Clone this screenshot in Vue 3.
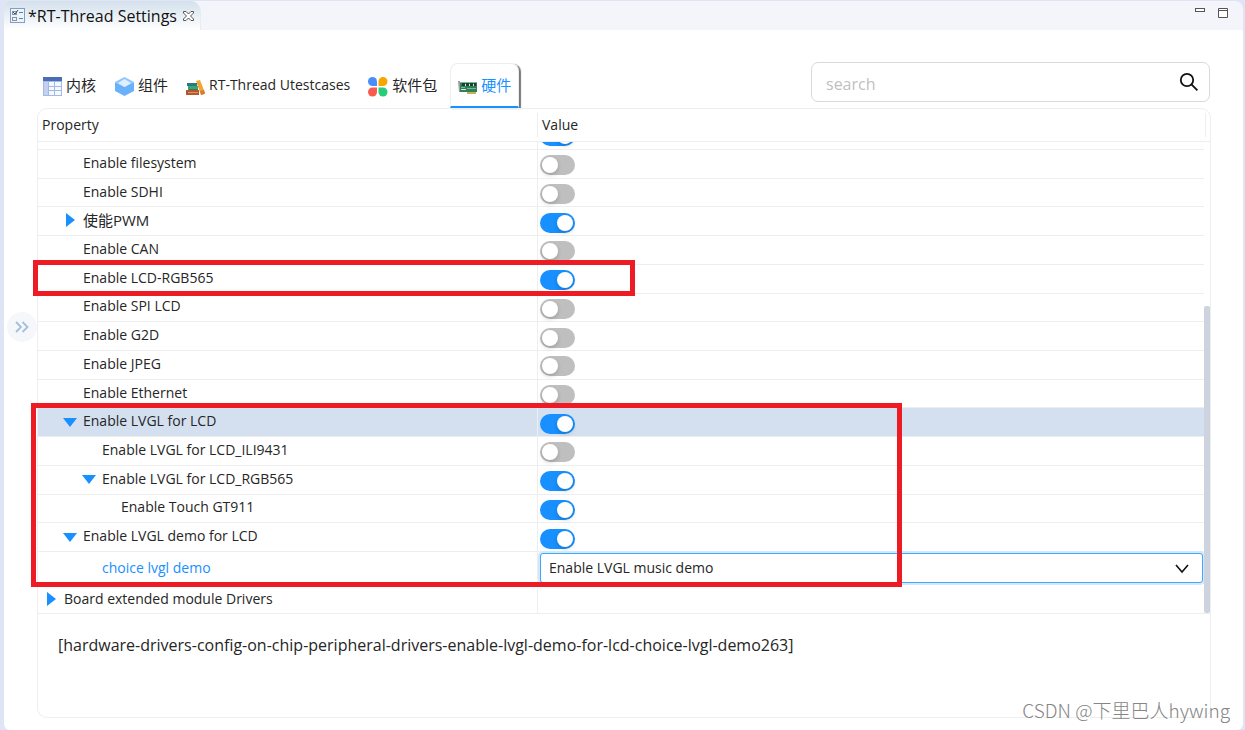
<script setup>
import { ref } from 'vue'

const tabs = [
  { id: 'kernel', label: '内核', cjk: true },
  { id: 'components', label: '组件', cjk: true },
  { id: 'tests', label: 'RT-Thread Utestcases' },
  { id: 'packages', label: '软件包', cjk: true },
  { id: 'hardware', label: '硬件', cjk: true },
]
const active = ref('hardware')

const rows = ref([
  { name: 'Enable filesystem', level: 2, on: false },
  { name: 'Enable SDHI', level: 2, on: false },
  { name: '使能PWM', level: 2, on: true, arrow: 'closed', cjk: true },
  { name: 'Enable CAN', level: 2, on: false },
  { name: 'Enable LCD-RGB565', level: 2, on: true },
  { name: 'Enable SPI LCD', level: 2, on: false },
  { name: 'Enable G2D', level: 2, on: false },
  { name: 'Enable JPEG', level: 2, on: false },
  { name: 'Enable Ethernet', level: 2, on: false },
  { name: 'Enable LVGL for LCD', level: 2, on: true, arrow: 'open', selected: true },
  { name: 'Enable LVGL for LCD_ILI9431', level: 3, on: false },
  { name: 'Enable LVGL for LCD_RGB565', level: 3, on: true, arrow: 'open' },
  { name: 'Enable Touch GT911', level: 4, on: true },
  { name: 'Enable LVGL demo for LCD', level: 2, on: true, arrow: 'open' },
])
const demo = ref('music')
const search = ref('')
</script>

<template>
  <div class="window">
    <header class="titlebar">
      <div class="doc-tab">
        <svg class="doc-icon" width="15" height="15" viewBox="0 0 15 15" fill="none">
          <rect x=".5" y=".5" width="14" height="14" fill="#eef4fb" stroke="#7f9fc6" />
          <rect x="2.5" y="3.5" width="4" height="3" stroke="#8a949e" />
          <path d="M3 4l2 2 3-4" stroke="#34495e" />
          <rect x="2.5" y="9.5" width="4" height="3" stroke="#8a949e" />
          <path d="M9 4.500h4M9 10.500h4" stroke="#6580a5" />
        </svg>
        <span>*RT-Thread Settings</span>
        <button class="plain" aria-label="Close">
          <svg width="11" height="10" viewBox="0 0 11 10" fill="#fff" stroke="#555" stroke-width="1">
            <path d="M.5.5h2.500l2.500 2.500L8 .5h2.500v1.500L7.500 5l3 3v1.500H8L5.500 7 3 9.500H.5V8l3-3-3-3z" />
          </svg>
        </button>
      </div>
      <div class="window-buttons">
        <button class="plain" aria-label="Minimize">
          <svg width="10" height="10" viewBox="0 0 10 10"><rect x=".5" y=".5" width="9" height="3" fill="#fff" stroke="#555" /></svg>
        </button>
        <button class="plain" aria-label="Maximize">
          <svg width="10" height="10" viewBox="0 0 10 10"><path d="M.5.5h9v9h-9zM.5 2.500h9" fill="#fff" stroke="#555" /></svg>
        </button>
      </div>
    </header>

    <main class="content">
      <div class="toolbar">
        <nav class="tabs">
          <button v-for="t in tabs" :key="t.id" class="tab" :class="{ active: t.id === active }" @click="active = t.id">
            <svg v-if="t.id === 'kernel'" width="19" height="19" viewBox="0 0 19 19">
              <path fill="#a3b8e2" d="M0 4h19v15H0z" /><path fill="#4a6db5" d="M0 0h19v4H0z" />
              <path fill="#c3d1ee" d="M1 5h4v13H1z" />
              <path fill="#f4f8ff" d="M6 5h5v4H6zM12 5h6v4h-6zM6 10h5v3H6zM12 10h6v3h-6zM6 14h5v4H6zM12 14h6v4h-6z" />
            </svg>
            <svg v-else-if="t.id === 'components'" width="19" height="19" viewBox="0 0 19 19">
              <path fill="#69b1fb" d="M0 5l9.500 5L19 5v9l-9.500 5L0 14z" /><path fill="#8ec6fd" d="M0 5l9.500-5L19 5l-9.500 5z" />
              <path fill="#deefff" d="M3 6l6.500-4L16 6 9.500 10z" />
            </svg>
            <svg v-else-if="t.id === 'tests'" width="19" height="19" viewBox="0 0 19 19">
              <path fill="#f0a534" d="M10 4l4-1 5 13-4 2z" /><path fill="#d67b35" d="M14 14l4-1 1 4-4 1z" />
              <path fill="#28788a" d="M1 6h10v3H1z" /><path fill="#3aa676" d="M2 9h10v4H2z" />
              <path fill="#3d7a52" d="M3 12h9v1H3z" />
              <path fill="#b8562f" d="M0 13h13v5H0z" /><path fill="#dc9560" d="M2 15h10v1H2z" />
            </svg>
            <svg v-else-if="t.id === 'packages'" width="20" height="20" viewBox="0 0 20 20">
              <path fill="#4b8df8" d="M4.500 0A4.500 4.500 0 0 1 9 4.500V9H4.500a4.500 4.500 0 0 1 0-9z" />
              <path fill="#f5a700" d="M15 0a4.500 4.500 0 0 1 0 9h-4.500V4.500A4.500 4.500 0 0 1 15 0z" />
              <path fill="#fa5b4c" d="M4.500 10.500H9V15a4.500 4.500 0 1 1-4.500-4.500z" />
              <path fill="#27cd78" d="M10.500 10.500H15a4.500 4.500 0 1 1-4.500 4.500z" />
            </svg>
            <svg v-else width="20" height="19" viewBox="0 0 20 19">
              <path fill="#98a2a5" d="M0 3h2l1 11H1z" /><path fill="#2f7f58" d="M2 4h17v10H2z" />
              <path fill="#163f36" d="M4 5h3v3H4zM8 5h3v3H8zM12 5h3v3h-3zM16 5h2v3h-2z" />
              <path fill="#dce9cb" d="M7 6h1v2H7zM11 6h1v2h-1zM15 6h1v2h-1zM3 11h5v1H3z" />
              <path fill="#7cb795" d="M2 4h17v1H2zM9 10h9v1H9zM3 9h4v1H3z" /><path fill="#c9af62" d="M9 14h9v2H9z" />
            </svg>
            <span :class="{ cjk: t.cjk }">{{ t.label }}</span>
          </button>
        </nav>
        <div class="search">
          <input v-model="search" type="text" placeholder="search" aria-label="search" />
          <button class="plain" aria-label="Search">
            <svg width="20" height="20" viewBox="0 0 20 20" fill="none" stroke="#111" stroke-width="1.800">
              <circle cx="8" cy="8" r="6.200" /><path d="M12.400 12.400l6 6" />
            </svg>
          </button>
        </div>
      </div>

      <section class="panel">
        <div class="table-area">
          <table>
            <thead>
              <tr><th scope="col">Property</th><th scope="col">Value</th></tr>
            </thead>
            <tbody>
              <tr class="clipped">
                <td></td>
                <td><input class="switch" type="checkbox" checked aria-label="Previous option" /></td>
              </tr>
              <tr v-for="(r, i) in rows" :key="r.name" :class="{ selected: r.selected }">
                <td :class="'level' + r.level">
                  <span v-if="r.arrow" class="arrow" :class="r.arrow"></span>
                  <label :for="'opt' + i" :class="{ cjk: r.cjk }">{{ r.name }}</label>
                </td>
                <td><input :id="'opt' + i" v-model="r.on" class="switch" type="checkbox" /></td>
              </tr>
              <tr class="choice">
                <td class="level3"><label for="demo">choice lvgl demo</label></td>
                <td>
                  <select id="demo" v-model="demo"><option value="music">Enable LVGL music demo</option></select>
                  <svg class="chevron" width="14" height="10" viewBox="0 0 14 10" fill="none" stroke="#111" stroke-width="1.600"><path d="M1 1l6 7 6-7" /></svg>
                </td>
              </tr>
              <tr class="board">
                <td class="level1"><span class="arrow closed"></span><span>Board extended module Drivers</span></td>
                <td></td>
              </tr>
            </tbody>
          </table>
          <div class="scrollbar"></div>
          <div class="mark mark-rgb"></div>
          <div class="mark mark-lvgl"></div>
        </div>
        <p class="description">[hardware-drivers-config-on-chip-peripheral-drivers-enable-lvgl-demo-for-lcd-choice-lvgl-demo263]</p>
      </section>
      <button class="expand" aria-label="Expand">
        <svg width="14" height="12" viewBox="0 0 14 12" fill="none" stroke="#a4bfdc" stroke-width="1.800"><path d="M1 1l5 5-5 5M7.500 1l5 5-5 5" /></svg>
      </button>
    </main>
    <div class="watermark">CSDN @下里巴人hywing</div>
  </div>
</template>

<style>
body { background: #e0e5f6; }
</style>

<style scoped>
* { box-sizing: border-box; }
.window {
  position: relative; display: flex; flex-direction: column; min-height: 100vh;
  padding: 1px 2px 0 4px; background: #e0e5f6; color: #262626;
  font: 400 14px/20px "Open Sans", "Noto Sans CJK SC", sans-serif;
}
button, input, select { font: inherit; color: inherit; }
button { cursor: pointer; }
.plain { display: flex; padding: 0; border: 0; background: none; }
.cjk { font-size: 15px; }
.titlebar { display: flex; justify-content: space-between; height: 29px; background: #f4f5fb; border-radius: 6px 8px 0 0; }
.doc-tab {
  display: flex; align-items: center; gap: 6px; padding: 0 6px; font-size: 16px; color: #111;
  border-right: 1px solid #e7ecf3; border-radius: 6px 10px 0 0; background: linear-gradient(#d3e0ec, #fff);
}
.doc-tab span { margin-left: -3px; }
.window-buttons { display: flex; gap: 13px; padding: 7px 15px 0 0; align-items: flex-start; }
.content { position: relative; flex: 1; display: flex; flex-direction: column; padding: 32px 32px 12px 33px; background: #fff; border-radius: 0 0 6px 6px; }
.toolbar { display: flex; justify-content: space-between; align-items: flex-start; height: 46px; padding-right: 1px; }
.tabs { display: flex; height: 46px; align-items: flex-end; }
.tab { display: flex; align-items: center; gap: 4px; height: 45px; padding: 0 9px 2px; border: 0; background: none; white-space: nowrap; }
.tab svg { margin-top: 4px; }
.tab:first-child { padding: 0 10px 2px 6px; }
.tab.active {
  gap: 3px; margin-left: 4px; padding: 0 7px; color: #1890ff; background: #fff;
  border: 1px solid #eee; border-bottom: 2px solid #1890ff; border-radius: 8px 8px 0 0; box-shadow: 2px 1px 1px #777;
}
.search { display: flex; align-items: center; width: 399px; height: 40px; padding: 0 10px 0 14px; border: 1px solid #d9d9d9; border-radius: 7px; }
.search input { flex: 1; min-width: 0; padding: 4px 0 0; border: 0; outline: 0; background: none; font-size: 16px; }
.search input::placeholder { color: #bfbfbf; opacity: 1; }
.panel { flex: 1; display: flex; flex-direction: column; border: 1px solid #eee; border-radius: 10px; }
.table-area { position: relative; display: flex; height: 505px; border-bottom: 1px solid #eee; }
table { flex: 1; display: flex; flex-direction: column; }
tr { display: grid; grid-template-columns: 500px 1fr; border-bottom: 1px solid #eee; }
thead tr { height: 33px; }
th { margin: 4px 0; padding: 2px 4px; text-align: left; font-weight: 500; border-right: 1px solid #eee; }
th:last-child { margin-right: 4px; }
tbody { flex: 1; display: grid; grid-template-rows: 8px repeat(14, 1fr) 32px 29px; margin-right: 6px; }
tbody tr:last-child { border-bottom: 0; }
td { position: relative; display: flex; align-items: center; min-width: 0; min-height: 0; padding: 0; }
td:first-child { border-right: 1px solid #eee; padding-bottom: 2px; }
td:last-child { padding: 3px 1px 0 2px; }
.level1 { padding-left: 26px; }
.level2 { padding-left: 45px; }
.level3 { padding-left: 64px; }
.level4 { padding-left: 83px; }
.selected { background: #d4e0f0; }
.clipped { overflow: hidden; }
.clipped td:last-child { align-items: flex-end; padding-bottom: 3px; }
.arrow { width: 0; height: 0; border: 7px solid transparent; }
.arrow.closed { margin: 0 5px 0 -17px; border-left: 9px solid #1890ff; border-right-width: 0; width: 12px; }
.arrow.open { margin: 2px 6px 0 -20px; border-top: 9px solid #1890ff; border-bottom-width: 0; }
.switch { appearance: none; flex: none; width: 35px; height: 20px; margin: 0; border-radius: 10px; background: #bfbfbf; }
.switch::before { content: ""; display: block; width: 16px; height: 16px; margin: 2px; border-radius: 50%; background: #fff; box-shadow: 0 2px 4px rgba(0, 35, 11, .2); }
.switch:checked { background: #1890ff; }
.switch:checked::before { margin-left: 17px; }
.choice label { color: #1890ff; }
.choice td:first-child { padding: 2px 0 0 64px; }
.choice td:last-child { padding: 1px 1px 0 2px; }
.board td:first-child { padding-bottom: 0; padding-top: 1px; }
select { appearance: none; width: 100%; height: 30px; padding: 1px 8px 0; border: 1px solid #40a9ff; border-radius: 3px; background: #fff; box-shadow: 0 0 0 2px #d3e8fb; outline: 0; }
.chevron { position: absolute; right: 15px; top: 12px; pointer-events: none; }
.scrollbar { position: absolute; right: 0; bottom: 0; width: 6px; height: 307px; background: #cdd3df; border-radius: 2px; }
.mark { position: absolute; border: 5px solid #ed1c24; pointer-events: none; }
.mark-rgb { left: -5px; top: 151px; width: 602px; height: 36px; }
.mark-lvgl { left: -7px; top: 294px; width: 871px; height: 184px; }
.description { margin: 0; padding: 21px 20px; font-size: 16px; }
.expand { position: absolute; left: 3px; top: 282px; display: flex; align-items: center; justify-content: center; width: 30px; height: 30px; padding: 0; border: 0; border-radius: 50%; background: #f5f7fa; }
.watermark { position: absolute; right: 15px; bottom: 6px; font: 300 19px/28px "Noto Sans CJK SC", sans-serif; color: #858585; text-shadow: 1px 1px 0 #fff; }
</style>
